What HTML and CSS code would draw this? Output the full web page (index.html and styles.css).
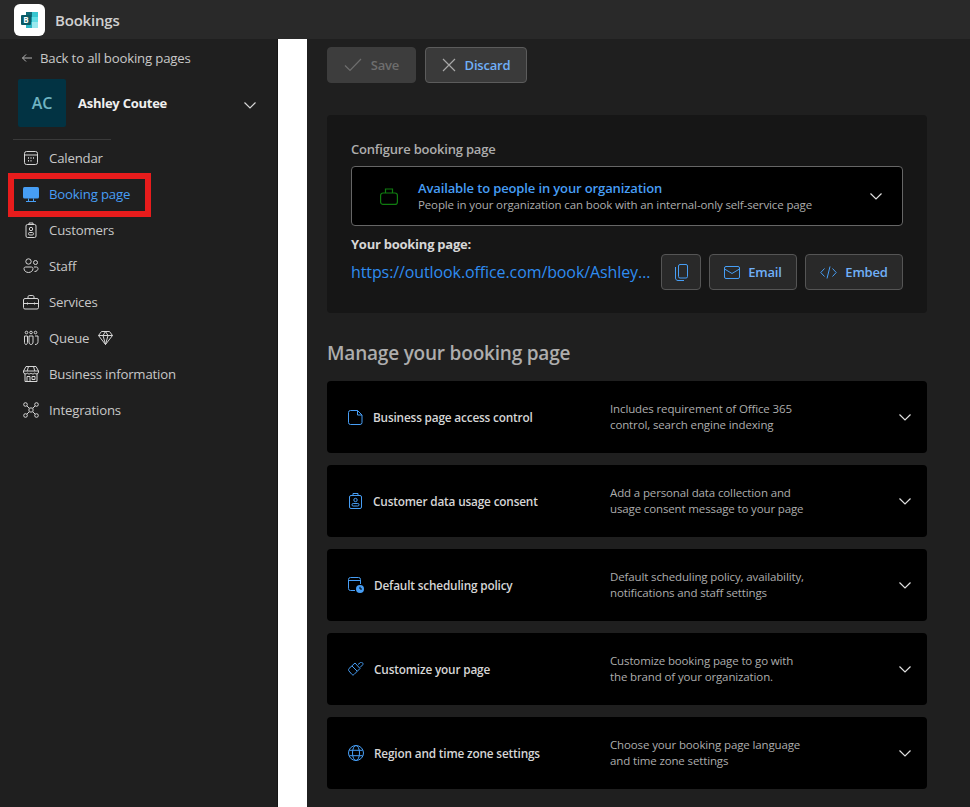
FILE: index.html
```html
<!DOCTYPE html>
<html lang="en">
<head>
  <meta charset="UTF-8">
  <title>Bookings</title>
  <link rel="stylesheet" href="styles.css">
</head>
<body>
  <header class="topbar">
    <div class="app-logo">
      <svg width="20" height="20" viewBox="0 0 20 20">
        <rect x="6" y="2" width="6" height="5" fill="#0f6b78"/>
        <rect x="12" y="2" width="6" height="5" fill="#37c6d0"/>
        <rect x="6" y="7" width="6" height="5" fill="#1490a0"/>
        <rect x="12" y="7" width="6" height="5" fill="#5fdde5"/>
        <rect x="6" y="12" width="6" height="6" fill="#2bb5c4"/>
        <rect x="12" y="12" width="6" height="6" fill="#9ae9ee"/>
        <rect x="1" y="5" width="10" height="10" rx="1" fill="#0b5a66"/>
        <text x="6" y="13" class="logo-letter">B</text>
      </svg>
    </div>
    <span class="app-name">Bookings</span>
  </header>

  <div class="layout">
    <nav class="sidebar">
      <a class="back-link">
        <svg width="12" height="12" viewBox="0 0 12 12" fill="none" stroke="#b5b5b5"><path d="M11 6H1.5M5 2.5 1.5 6 5 9.5"/></svg>
        Back to all booking pages
      </a>
      <div class="account">
        <div class="avatar">AC</div>
        <span class="account-name">Ashley Coutee</span>
        <svg class="account-chevron" width="14" height="14" viewBox="0 0 14 14" fill="none" stroke="#d6d6d6" stroke-width="1.2"><path d="M1.5 4.5 7 10l5.500-5.500"/></svg>
      </div>
      <div class="divider"></div>
      <ul class="nav-list">
        <li class="nav-item">
          <svg width="16" height="16" viewBox="0 0 16 16" fill="none" stroke="#d6d6d6"><rect x="1.500" y="1.500" width="13" height="13" rx="2"/><path d="M1.500 5h13"/><path d="M5 8h1M7.500 8h1M10 8h1M5 10.800h1M7.500 10.800h1" stroke-width="1.400"/></svg>
          Calendar
        </li>
        <li class="nav-item active">
          <svg width="16" height="16" viewBox="0 0 16 16" fill="#479ef5"><rect x="0" y="1" width="16" height="11.500" rx="1.500"/><path d="M3 15h10v1H3zM5 12.500h1V15H5zM10 12.500h1V15h-1z"/></svg>
          Booking page
        </li>
        <li class="nav-item">
          <svg width="16" height="16" viewBox="0 0 16 16" fill="none" stroke="#d6d6d6"><rect x="3" y="2.500" width="10" height="13" rx="1.500"/><path d="M6 2.500V1h4v1.500"/><circle cx="8" cy="7" r="1.700"/><rect x="5.500" y="10.500" width="5" height="2.500" rx="1.200"/></svg>
          Customers
        </li>
        <li class="nav-item">
          <svg width="16" height="16" viewBox="0 0 16 16" fill="none" stroke="#d6d6d6"><circle cx="5.500" cy="3.500" r="2.700"/><circle cx="12.500" cy="4.500" r="2"/><path d="M1 10.500c0-1 .8-1.500 1.500-1.500h6c.8 0 1.500.6 1.500 1.500 0 2.300-2 4-4.500 4S1 12.800 1 10.500zM11 9h2.500c.9 0 1.500.7 1.500 1.500 0 1.700-1.300 3-3.500 3"/></svg>
          Staff
        </li>
        <li class="nav-item">
          <svg width="16" height="16" viewBox="0 0 16 16" fill="none" stroke="#d6d6d6"><rect x=".5" y="4.500" width="15" height="10.500" rx="1.500"/><path d="M5 4.500V2.800c0-.7.500-1.300 1.200-1.300h3.600c.7 0 1.200.6 1.200 1.300v1.700M.5 9.500h15M4.500 8.500v2M11.500 8.500v2"/></svg>
          Services
        </li>
        <li class="nav-item">
          <svg width="16" height="16" viewBox="0 0 16 16" fill="none" stroke="#d6d6d6"><circle cx="3.500" cy="2.500" r="1.300"/><circle cx="8" cy="2.500" r="1.300"/><circle cx="12.500" cy="2.500" r="1.300"/><path d="M1.500 6h3v6.500c0 1-.7 2-1.500 2s-1.500-1-1.500-2zM6 6h4v6c0 1.500-.8 2.500-2 2.500S6 13.500 6 12zM12 6h3v5.500c0 2-1 3-3 3"/></svg>
          Queue
          <svg class="gem" width="15" height="14" viewBox="0 0 15 14" fill="none" stroke="#d6d6d6"><path d="M3.500.500h8l3 4-7 9-7-9zM.5 4.500h14M5 4.500 7.500.5l2.500 4-2.500 9z"/></svg>
        </li>
        <li class="nav-item">
          <svg width="16" height="16" viewBox="0 0 16 16" fill="none" stroke="#d6d6d6"><path d="M3 .5h10l2.500 4.500v1a2 2 0 0 1-3.700 1 2.300 2.300 0 0 1-3.800 0 2.300 2.300 0 0 1-3.800 0A2 2 0 0 1 .5 6V5zM.5 5h15M5.500.5 4.200 5M10.500.5 11.800 5"/><path d="M2 8v7.500h12V8"/><path d="M4 10.500h3v5H4zM9 10.500h3v3H9z"/></svg>
          Business information
        </li>
        <li class="nav-item">
          <svg width="16" height="16" viewBox="0 0 16 16" fill="none" stroke="#d6d6d6"><circle cx="2.500" cy="2.500" r="1.800"/><circle cx="13.500" cy="2.500" r="1.800"/><circle cx="2.500" cy="13.500" r="1.800"/><circle cx="13.500" cy="13.500" r="1.800"/><rect x="6" y="6" width="4" height="4" rx="1"/><path d="M3.800 3.800 6 6M12.200 3.800 10 6M3.800 12.200 6 10M12.200 12.200 10 10"/></svg>
          Integrations
        </li>
      </ul>
    </nav>

    <div class="gutter"></div>

    <main class="content">
      <div class="toolbar">
        <button class="btn btn-save">
          <svg width="18" height="14" viewBox="0 0 18 14" fill="none" stroke="#6e6e6e" stroke-width="1.200"><path d="M1 7.500 6 12.500 17 1"/></svg>
          Save
        </button>
        <button class="btn btn-discard">
          <svg width="14" height="14" viewBox="0 0 14 14" fill="none" stroke="#a8a8a8" stroke-width="1.200"><path d="M1 1l12 12M13 1 1 13"/></svg>
          Discard
        </button>
      </div>

      <section class="config-card">
        <h3 class="config-title">Configure booking page</h3>
        <div class="select-box">
          <svg class="select-icon" width="18" height="17" viewBox="0 0 18 17" fill="none" stroke="#107c10" stroke-width="1.200"><rect x=".6" y="5" width="16.800" height="11.400" rx="2.500"/><path d="M5.500 5V1h7v4"/></svg>
          <div class="select-text">
            <div class="select-title">Available to people in your organization</div>
            <div class="select-sub">People in your organization can book with an internal-only self-service page</div>
          </div>
          <svg class="chevron" width="14" height="14" viewBox="0 0 14 14" fill="none" stroke="#e0e0e0" stroke-width="1.200"><path d="M1.500 4.500 7 10l5.500-5.500"/></svg>
        </div>
        <div class="page-label">Your booking page:</div>
        <div class="link-row">
          <a class="page-url">https://outlook.office.com/book/AshleyCoutee@contoso.com/</a>
          <button class="btn btn-small btn-copy">
            <svg width="13" height="17" viewBox="0 0 13 17" fill="none" stroke="#479ef5"><rect x="3.500" y=".5" width="9" height="13.500" rx="1.500"/><path d="M.5 3v11c0 1.400 1 2.500 2.500 2.500h6"/></svg>
          </button>
          <button class="btn btn-small">
            <svg width="16" height="13" viewBox="0 0 16 13" fill="none" stroke="#479ef5"><rect x=".5" y=".5" width="15" height="12" rx="1.500"/><path d="M.5 3 8 7.500 15.500 3"/></svg>
            Email
          </button>
          <button class="btn btn-small">
            <svg width="17" height="13" viewBox="0 0 17 13" fill="none" stroke="#479ef5"><path d="M4.500 2.500.8 6.500l3.700 4M12.500 2.500l3.700 4-3.700 4M10 .5 7 12.500"/></svg>
            Embed
          </button>
        </div>
      </section>

      <h2 class="manage-title">Manage your booking page</h2>

      <div class="setting-row">
        <div class="setting-name">
          <svg width="15" height="15" viewBox="0 0 15 15" fill="none" stroke="#479ef5"><path d="M2.500.5h7L14 5v7.500a2 2 0 0 1-2 2H2.500a2 2 0 0 1-2-2v-10a2 2 0 0 1 2-2zM9.500.5V5H14"/></svg>
          Business page access control
        </div>
        <div class="setting-desc">Includes requirement of Office 365<br>control, search engine indexing</div>
        <svg class="chevron" width="14" height="14" viewBox="0 0 14 14" fill="none" stroke="#e0e0e0" stroke-width="1.200"><path d="M1.500 4.500 7 10l5.500-5.500"/></svg>
      </div>
      <div class="setting-row">
        <div class="setting-name">
          <svg width="15" height="16" viewBox="0 0 15 16" fill="none" stroke="#479ef5"><rect x="1.500" y="2.500" width="12" height="13" rx="1.500"/><path d="M5 2.500V.5h5v2"/><circle cx="7.500" cy="7" r="1.700"/><rect x="4" y="10.500" width="7" height="2.500" rx="1.200"/></svg>
          Customer data usage consent
        </div>
        <div class="setting-desc">Add a personal data collection and<br>usage consent message to your page</div>
        <svg class="chevron" width="14" height="14" viewBox="0 0 14 14" fill="none" stroke="#e0e0e0" stroke-width="1.200"><path d="M1.500 4.500 7 10l5.500-5.500"/></svg>
      </div>
      <div class="setting-row">
        <div class="setting-name">
          <svg width="16" height="16" viewBox="0 0 16 16" fill="none" stroke="#479ef5"><path d="M7 13.500H2.500a2 2 0 0 1-2-2v-9a2 2 0 0 1 2-2h8a2 2 0 0 1 2 2V7M.5 3.500h12"/><circle cx="12" cy="12" r="4" fill="#479ef5" stroke="none"/><path d="M12 9.800V12h2" stroke="#000"/></svg>
          Default scheduling policy
        </div>
        <div class="setting-desc">Default scheduling policy, availability,<br>notifications and staff settings</div>
        <svg class="chevron" width="14" height="14" viewBox="0 0 14 14" fill="none" stroke="#e0e0e0" stroke-width="1.200"><path d="M1.500 4.500 7 10l5.500-5.500"/></svg>
      </div>
      <div class="setting-row">
        <div class="setting-name">
          <svg width="16" height="15" viewBox="0 0 16 15" fill="none" stroke="#479ef5"><path d="M1 6.500 7 1l5 5.500-6 6c-.6.600-1.400.600-2 0L1 9c-.6-.7-.6-1.800 0-2.500zM4 4l5 5"/><path d="M10 2.500 12.500.5c.6-.4 1.400-.3 2 .3s.6 1.400.2 2L12 5.500"/></svg>
          Customize your page
        </div>
        <div class="setting-desc">Customize booking page to go with<br>the brand of your organization.</div>
        <svg class="chevron" width="14" height="14" viewBox="0 0 14 14" fill="none" stroke="#e0e0e0" stroke-width="1.200"><path d="M1.500 4.500 7 10l5.500-5.500"/></svg>
      </div>
      <div class="setting-row">
        <div class="setting-name">
          <svg width="16" height="16" viewBox="0 0 16 16" fill="none" stroke="#479ef5"><circle cx="8" cy="8" r="7.500"/><ellipse cx="8" cy="8" rx="3.500" ry="7.500"/><path d="M1.300 5.300h13.400M1.300 10.700h13.400"/></svg>
          Region and time zone settings
        </div>
        <div class="setting-desc">Choose your booking page language<br>and time zone settings</div>
        <svg class="chevron" width="14" height="14" viewBox="0 0 14 14" fill="none" stroke="#e0e0e0" stroke-width="1.200"><path d="M1.500 4.500 7 10l5.500-5.500"/></svg>
      </div>
    </main>
  </div>

  <div class="highlight"></div>
</body>
</html>
```

FILE: styles.css
```css
html, body {
  height: 100%;
}

body {
  margin: 0;
  height: 807px;
  overflow: hidden;
  font-family: "Open Sans", "Noto Sans", sans-serif;
  font-size: 13px;
  background-color: #1f1f1f;
  color: #d6d6d6;
  display: flex;
  flex-direction: column;
}

/* Top bar */
.topbar {
  height: 39px;
  flex: none;
  background-color: #292929;
  display: flex;
  align-items: center;
  padding-left: 14px;
  box-sizing: border-box;
}

.app-logo {
  width: 31px;
  height: 32px;
  background-color: #fff;
  border-radius: 6px;
  display: flex;
  align-items: center;
  justify-content: center;
}

.logo-letter {
  font-size: 8px;
  font-weight: 700;
  fill: #fff;
  text-anchor: middle;
}

.app-name {
  margin-left: 10px;
  font-size: 15px;
  font-weight: 600;
  color: #d0d0d0;
  letter-spacing: -0.2px;
}

.layout {
  flex: 1;
  display: flex;
  min-height: 0;
}

/* Sidebar */
.sidebar {
  width: 278px;
  flex: none;
  box-sizing: border-box;
  background-color: #1f1f1f;
  border-right: 1px solid #151515;
  padding-top: 9px;
}

.back-link {
  display: flex;
  align-items: center;
  gap: 7px;
  margin-left: 21px;
  height: 20px;
  font-size: 13.200px;
  color: #c8c8c8;
  letter-spacing: -0.18px;
}

.account {
  display: flex;
  align-items: center;
  margin: 11px 0 0 18px;
  height: 48px;
}

.avatar {
  width: 48px;
  height: 48px;
  border-radius: 2px;
  background-color: #023343;
  color: #6fb3c2;
  font-size: 16px;
  font-weight: 600;
  display: flex;
  align-items: center;
  justify-content: center;
}

.account-name {
  margin-left: 12px;
  font-size: 13px;
  font-weight: 700;
  color: #f0f0f0;
  letter-spacing: -0.25px;
}

.account-chevron {
  margin-left: auto;
  margin-right: 20px;
  margin-top: 4px;
}

.divider {
  width: 98px;
  margin: 12px 0 0 13px;
  border-top: 1px solid #3a3a3a;
}

.nav-list {
  list-style: none;
  margin: 0;
  padding: 0;
}

.nav-item {
  height: 36px;
  display: flex;
  align-items: center;
  gap: 10px;
  padding-left: 23px;
  font-size: 13.200px;
  color: #c8c8c8;
  letter-spacing: -0.18px;
}

.nav-item.active {
  color: #479ef5;
}

.nav-item .gem {
  margin-left: -1px;
}

.highlight {
  position: absolute;
  left: 8px;
  top: 173px;
  width: 131px;
  height: 32px;
  border: 6px solid #e81c1c;
}

.gutter {
  width: 29px;
  flex: none;
  background-color: #fff;
}

/* Main column */
.content {
  flex: 1;
  min-width: 0;
  padding: 8px 43px 0 20px;
  background-color: #1f1f1f;
}

.toolbar {
  display: flex;
  gap: 9px;
}

.btn {
  display: flex;
  align-items: center;
  justify-content: center;
  gap: 8px;
  box-sizing: border-box;
  height: 36px;
  border-radius: 4px;
  border: 1px solid #555;
  background-color: #2e2e2e;
  font-family: inherit;
  font-size: 13px;
  font-weight: 600;
  color: #70b0f8;
  letter-spacing: -0.2px;
  padding: 0;
}

.btn-save {
  width: 89px;
  gap: 9px;
  background-color: #3d3d3d;
  border-color: #3d3d3d;
  color: #6e6e6e;
}

.btn-discard {
  width: 102px;
  background-color: #3a3a3a;
  border-color: #5c5c5c;
  gap: 9px;
}

.config-card {
  margin-top: 32px;
  height: 198px;
  box-sizing: border-box;
  background-color: #161616;
  border-radius: 4px;
  padding: 24px 24px 0;
}

.config-title {
  margin: 0;
  font-size: 13px;
  line-height: 20px;
  font-weight: 600;
  color: #adadad;
  letter-spacing: -0.2px;
}

.select-box {
  margin-top: 7px;
  height: 60px;
  box-sizing: border-box;
  background-color: #000;
  border: 1px solid #666;
  border-radius: 4px;
  display: flex;
  align-items: center;
  padding: 0 19px 0 28px;
}

.select-icon {
  flex: none;
}

.select-text {
  margin-left: 20px;
  flex: 1;
}

.select-title {
  font-size: 13px;
  line-height: 18px;
  font-weight: 600;
  color: #479ef5;
  letter-spacing: -0.13px;
}

.select-sub {
  font-size: 11.500px;
  line-height: 16px;
  color: #adadad;
  letter-spacing: -0.13px;
}

.chevron {
  flex: none;
}

.page-label {
  margin-top: 9px;
  font-size: 13px;
  line-height: 18px;
  font-weight: 700;
  color: #d6d6d6;
  letter-spacing: -0.25px;
}

.link-row {
  display: flex;
  align-items: center;
  margin-top: 1px;
}

.page-url {
  flex: 1;
  min-width: 0;
  overflow: hidden;
  white-space: nowrap;
  text-overflow: ellipsis;
  font-size: 16px;
  color: #2f8cf0;
  letter-spacing: -0.1px;
}

.btn-small {
  flex: none;
  width: 98px;
  margin-left: 8px;
  background-color: #292929;
  border-color: #555;
  color: #70b0f8;
}

.btn-small:nth-of-type(2) {
  width: 88px;
}

.btn-copy {
  width: 40px;
  margin-left: 4px;
}

.manage-title {
  margin: 27px 0 15px;
  font-size: 19px;
  line-height: 26px;
  font-weight: 600;
  color: #adadad;
  letter-spacing: -0.2px;
}

.setting-row {
  height: 72px;
  margin-bottom: 12px;
  background-color: #000;
  border-radius: 4px;
  display: flex;
  align-items: center;
  padding: 0 15px 0 21px;
}

.setting-name {
  width: 262px;
  flex: none;
  display: flex;
  align-items: center;
  gap: 10px;
  font-size: 11.800px;
  font-weight: 600;
  color: #d6d6d6;
  letter-spacing: -0.17px;
}

.setting-desc {
  flex: 1;
  font-size: 11.500px;
  line-height: 16px;
  color: #adadad;
  letter-spacing: -0.13px;
}
```
